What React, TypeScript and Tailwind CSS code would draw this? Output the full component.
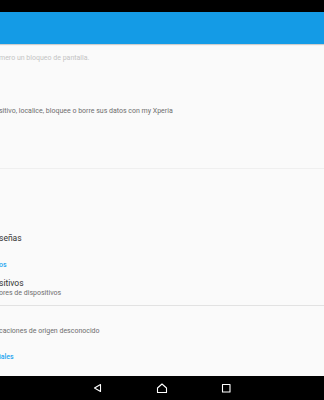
import React from 'react'

const font = { fontFamily: 'Roboto, "Noto Sans", sans-serif' }

function NavBar() {
    return (
        <div className="flex h-[24px] w-full items-center bg-black">
            <svg width="324" height="24" viewBox="0 0 324 24" fill="none" stroke="#ffffff" strokeWidth="1.1" strokeLinejoin="round">
                <path d="M100.5 8.5 L94.5 12 L100.5 15.5 Z" />
                <path d="M157.5 16.5 L157.5 12 L162 8 L166.5 12 L166.5 16.5 Z" />
                <rect x="222.5" y="8.5" width="7.5" height="7.5" />
            </svg>
        </div>
    )
}

export default function App() {
    return (
        <div className="flex h-[400px] w-[324px] flex-col overflow-hidden bg-[#fafafa]" style={font}>
            <div className="h-[12px] w-full bg-black" />
            <div className="relative z-10 h-[32px] w-full bg-[#149be6] shadow-[0_1px_1px_rgba(0,0,0,0.18)]" />

            <div className="flex flex-1 flex-col overflow-hidden">
                <div className="mt-[1px] flex h-[26px] items-center whitespace-nowrap text-[7px] text-[#c4c4c4]">
                    <span className="-ml-[1px]">mero un bloqueo de pantalla.</span>
                </div>
                <div className="mt-[27px] flex h-[26px] items-center whitespace-nowrap text-[7px] text-[#6e6e6e]">
                    <span className="-ml-[1px]">sitivo, localice, bloquee o borre sus datos con my Xperia</span>
                </div>
                <div className="h-[44px]" />
                <div className="h-[1px] bg-[#efefef]" />

                <div className="mt-[62px] flex h-[14px] items-center whitespace-nowrap text-[8.5px] text-[#333333]">
                    <span className="-ml-[1px]">señas</span>
                </div>
                <div className="mt-[13px] flex h-[14px] items-center whitespace-nowrap text-[7px] font-medium text-[#1ea5f0]">
                    <span className="-ml-[1px]">os</span>
                </div>
                <div className="mt-[6px] flex h-[10px] items-center whitespace-nowrap text-[8.5px] text-[#333333]">
                    <span className="-ml-[1px]">sitivos</span>
                </div>
                <div className="flex h-[10px] items-center whitespace-nowrap text-[7px] text-[#6e6e6e]">
                    <span className="-ml-[1px]">ores de dispositivos</span>
                </div>
                <div className="h-[7px]" />
                <div className="h-[1px] bg-[#e2e2e2]" />

                <div className="mt-[18px] flex h-[14px] items-center whitespace-nowrap text-[7px] text-[#6e6e6e]">
                    <span className="-ml-[1px]">caciones de origen desconocido</span>
                </div>
                <div className="mt-[12px] flex h-[14px] items-center whitespace-nowrap text-[7px] font-medium text-[#1ea5f0]">
                    <span className="-ml-[1px]">iales</span>
                </div>
            </div>

            <NavBar />
        </div>
    )
}
